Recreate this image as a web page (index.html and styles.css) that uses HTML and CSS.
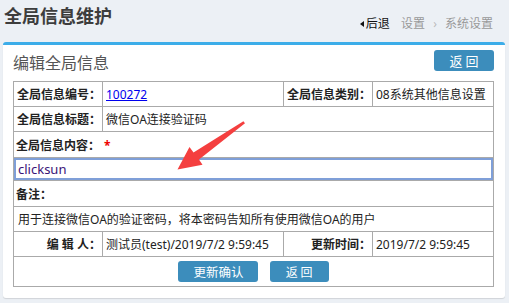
FILE: index.html
```html
<!DOCTYPE html>
<html lang="zh-CN">
<head>
    <meta charset="UTF-8">
    <title>全局信息维护</title>
    <link rel="stylesheet" href="styles.css">
</head>
<body>

    <!-- Page header -->
    <div class="page-head">
        <h1>全局信息维护</h1>
        <div class="crumbs">
            <span class="back"><span class="caret"></span>后退</span>
            <span class="crumb">设置</span>
            <span class="sep">›</span>
            <span class="crumb">系统设置</span>
        </div>
    </div>

    <!-- Edit box -->
    <div class="box">
        <div class="box-head">
            <h2>编辑全局信息</h2>
            <button class="btn btn-back">返 回</button>
        </div>
        <table class="form-table">
            <colgroup>
                <col style="width:89px">
                <col style="width:181px">
                <col style="width:89px">
                <col>
            </colgroup>
            <tr>
                <td class="label">全局信息编号：</td>
                <td><a href="#">100272</a></td>
                <td class="label">全局信息类别：</td>
                <td>08系统其他信息设置</td>
            </tr>
            <tr>
                <td class="label">全局信息标题：</td>
                <td colspan="3">微信OA连接验证码</td>
            </tr>
            <tr class="tall">
                <td colspan="4" class="label left">全局信息内容：<span class="req">*</span></td>
            </tr>
            <tr class="input-row">
                <td colspan="4"><input type="text" class="content-input" value="clicksun"></td>
            </tr>
            <tr class="tall">
                <td colspan="4" class="label left">备注：</td>
            </tr>
            <tr>
                <td colspan="4" class="remark">用于连接微信OA的验证密码，将本密码告知所有使用微信OA的用户</td>
            </tr>
            <tr>
                <td class="label">编 辑 人：</td>
                <td>测试员(test)/2019/7/2 9:59:45</td>
                <td class="label">更新时间：</td>
                <td>2019/7/2 9:59:45</td>
            </tr>
            <tr class="actions">
                <td colspan="4">
                    <button class="btn btn-save">更新确认</button>
                    <button class="btn btn-return">返 回</button>
                </td>
            </tr>
        </table>
    </div>

    <!-- Annotation arrow -->
    <svg class="arrow" width="509" height="303" viewBox="0 0 509 303">
        <polygon points="243.4,121.2 245,123.2 199,159.5 202.5,164.8 177.5,169.5 189.5,147 193.5,152.5" fill="#f43f3f"/>
    </svg>

</body>
</html>
```

FILE: styles.css
```css
body {
    margin: 0;
    background: #ecf0f5;
    font-family: "Noto Sans", "Noto Sans CJK SC", sans-serif;
    font-size: 12px;
    color: #222;
    position: relative;
    height: 303px;
    overflow: hidden;
}
.page-head {
    display: flex;
    justify-content: space-between;
    height: 42px;
    box-sizing: border-box;
    padding: 3px 16px 0 4px;
}
.page-head h1 {
    margin: 0;
    font-size: 18px;
    line-height: 26px;
    font-weight: bold;
    color: #3d3d3d;
}
.crumbs {
    margin-top: 13px;
    font-size: 12px;
    line-height: 16px;
    color: #999;
}
.back {
    color: #111;
    margin-right: 8px;
}
.caret {
    display: inline-block;
    width: 0;
    height: 0;
    border-top: 3px solid transparent;
    border-bottom: 3px solid transparent;
    border-right: 4px solid #111;
    margin-right: 2px;
    vertical-align: 1px;
}
.sep {
    color: #bbb;
    margin: 0 5px;
}
.box {
    margin: 0 4px 0 3px;
    background: #fff;
    border-top: 3px solid #3cade9;
    border-radius: 3px;
    box-shadow: 0 1px 1px rgba(0, 0, 0, 0.12);
    padding: 0 11px 11px 10px;
}
.box-head {
    display: flex;
    justify-content: space-between;
    align-items: flex-start;
    height: 36px;
}
.box-head h2 {
    margin: 8px 0 0;
    font-size: 16px;
    line-height: 20px;
    font-weight: normal;
    color: #555;
}
.btn {
    border: none;
    border-radius: 3px;
    background: #3c8dbc;
    color: #fff;
    font-family: "Noto Sans CJK SC", sans-serif;
    font-size: 12px;
    height: 21px;
    padding: 0;
    cursor: pointer;
}
.btn-back {
    width: 60px;
    margin-top: 5px;
    font-size: 13px;
}
.form-table {
    width: 100%;
    border-collapse: collapse;
    table-layout: fixed;
}
.form-table td {
    border: 1px solid #aaa;
    height: 24px;
    padding: 0 3px;
    white-space: nowrap;
    overflow: hidden;
}
.form-table .label {
    text-align: right;
    font-weight: bold;
    padding: 0 1px 0 0;
}
.form-table .left {
    text-align: left;
    padding-left: 2px;
}
.form-table tr.tall td {
    height: 25px;
}
.req {
    color: #e00;
    margin-left: 4px;
}
.form-table a {
    color: #00e;
}
.form-table .remark {
    padding-left: 4px;
}
.input-row td {
    height: 22px;
    padding: 0;
}
.content-input {
    display: block;
    width: 100%;
    height: 22px;
    box-sizing: border-box;
    border: 2px solid #7f9fd8;
    padding: 0 2px;
    font-family: "Noto Sans", "Noto Sans CJK SC", sans-serif;
    font-size: 13px;
    color: #3a1478;
    box-shadow: 0 -1px 0 #e8303a, 0 2px 0 #e8303a;
    outline: none;
}
.actions td {
    height: 29px;
    text-align: center;
}
.btn-save {
    width: 80px;
    margin-right: 8px;
    font-size: 12.5px;
}
.btn-return {
    width: 59px;
}
.arrow {
    position: absolute;
    left: 0;
    top: 0;
    pointer-events: none;
}
```
